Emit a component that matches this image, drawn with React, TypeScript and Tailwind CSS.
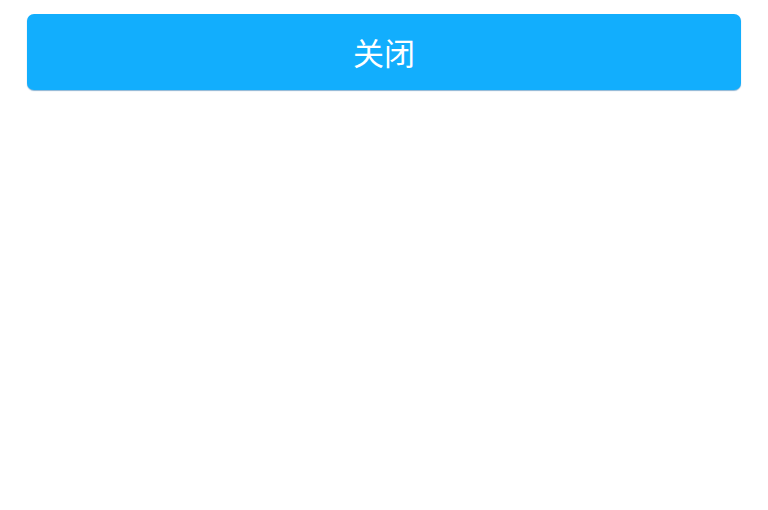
export default function App() {
  return (
    <div className="min-h-[510px] w-full bg-white px-[27px] pt-[14px]" style={{ fontFamily: '"Noto Sans CJK SC", "Noto Sans", sans-serif' }}>
      <button className="flex h-[76px] w-full items-center justify-center rounded-[7px] bg-[#12aefd] text-[31px] text-white shadow-[0_1px_1px_rgba(0,90,160,0.45)]">
        关闭
      </button>
    </div>
  );
}
